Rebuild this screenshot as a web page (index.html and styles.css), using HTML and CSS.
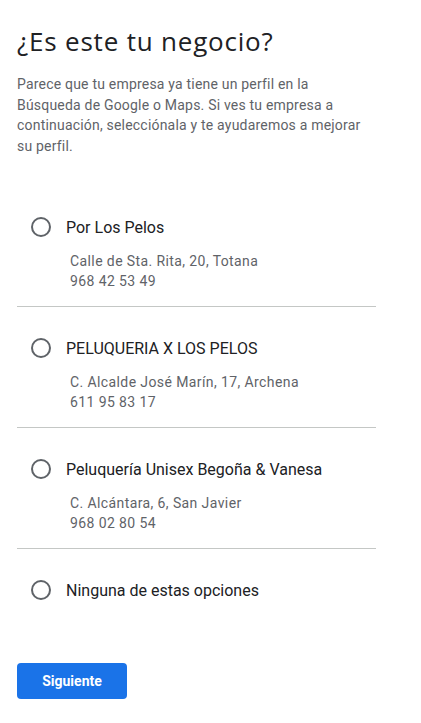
FILE: index.html
```html
<!DOCTYPE html>
<html lang="es">

<head>
    <meta charset="UTF-8">
    <meta name="viewport" content="width=device-width, initial-scale=1.0">
    <title>¿Es este tu negocio?</title>
    <link rel="stylesheet" href="styles.css">
</head>

<body>
    <div class="page">
        <h1 class="title">¿Es este tu negocio?</h1>
        <p class="intro">Parece que tu empresa ya tiene un perfil en la Búsqueda de Google o Maps. Si ves tu empresa a continuación, selecciónala y te ayudaremos a mejorar su perfil.</p>

        <!-- Lista de negocios -->
        <div class="options">
            <label class="option">
                <span class="option-head">
                    <input type="radio" name="negocio" class="radio">
                    <span class="name">Por Los Pelos</span>
                </span>
                <span class="details">
                    <span>Calle de Sta. Rita, 20, Totana</span>
                    <span>968 42 53 49</span>
                </span>
            </label>
            <label class="option">
                <span class="option-head">
                    <input type="radio" name="negocio" class="radio">
                    <span class="name">PELUQUERIA X LOS PELOS</span>
                </span>
                <span class="details">
                    <span>C. Alcalde José Marín, 17, Archena</span>
                    <span>611 95 83 17</span>
                </span>
            </label>
            <label class="option">
                <span class="option-head">
                    <input type="radio" name="negocio" class="radio">
                    <span class="name">Peluquería Unisex Begoña &amp; Vanesa</span>
                </span>
                <span class="details">
                    <span>C. Alcántara, 6, San Javier</span>
                    <span>968 02 80 54</span>
                </span>
            </label>
            <label class="option option-last">
                <span class="option-head">
                    <input type="radio" name="negocio" class="radio">
                    <span class="name">Ninguna de estas opciones</span>
                </span>
            </label>
        </div>

        <button class="next-button">Siguiente</button>
    </div>
</body>

</html>
```

FILE: styles.css
```css
body {
    margin: 0;
    background: #fff;
    font-family: Roboto, "Liberation Sans", sans-serif;
}

.page {
    width: 359px;
    padding: 24px 17px 0;
}

/* Заголовок */
.title {
    margin: 0;
    font-family: "Open Sans", Roboto, sans-serif;
    font-size: 26px;
    font-weight: 400;
    letter-spacing: 0.8px;
    line-height: 34px;
    color: #202124;
}

.intro {
    width: 350px;
    margin: 16px 0 0;
    font-size: 14px;
    letter-spacing: 0.2px;
    line-height: 20.5px;
    color: #5f6368;
}

/* Список вариантов */
.options {
    margin-top: 30px;
}

.option {
    display: block;
    padding: 29px 0 15px;
    border-bottom: 1px solid #c4c7c5;
    cursor: pointer;
}

.option-last {
    border-bottom: none;
    padding-bottom: 0;
}

.option-head {
    display: flex;
    align-items: center;
    height: 24px;
}

.radio {
    appearance: none;
    width: 20px;
    height: 20px;
    margin: 0 15px 0 14px;
    border: 2px solid #5f6368;
    border-radius: 50%;
    box-sizing: border-box;
}

.name {
    font-size: 16px;
    color: #202124;
}

.details {
    display: flex;
    flex-direction: column;
    margin: 12px 0 0 53px;
    font-size: 14px;
    letter-spacing: 0.4px;
    line-height: 20px;
    color: #5f6368;
}

/* Кнопка */
.next-button {
    margin-top: 61px;
    width: 110px;
    height: 36px;
    border: none;
    border-radius: 4px;
    background: #1a73e8;
    color: #fff;
    font-family: Roboto, sans-serif;
    font-size: 14px;
    font-weight: 700;
    cursor: pointer;
}
```
